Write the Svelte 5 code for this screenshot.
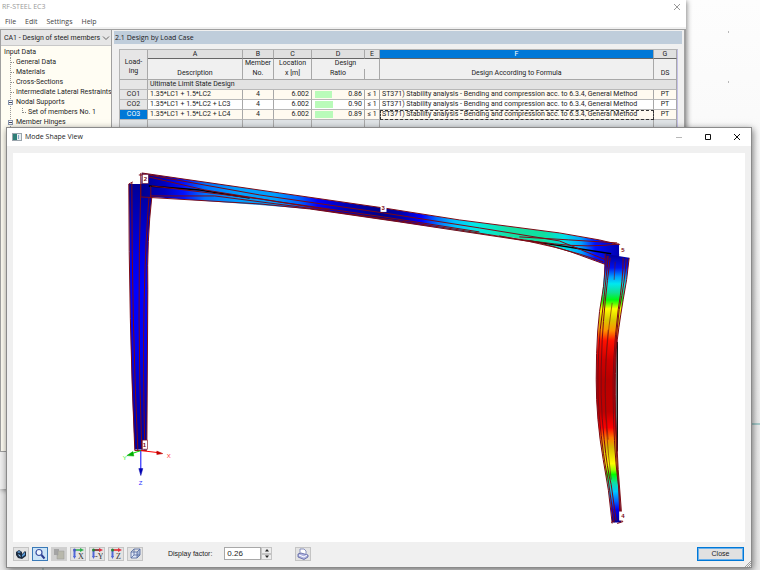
<script lang="ts">
	/**
	 * Design module window with the mode shape viewer opened on top of it.
	 */

	interface TreeNode {
		label: string;
		level: number;
		toggle?: boolean;
	}

	interface ResultRow {
		loading: string;
		description: string;
		member: number;
		location: string;
		ratio: number;
	}

	const menu = ['File', 'Edit', 'Settings', 'Help'];

	const tree: TreeNode[] = [
		{ label: 'General Data', level: 1 },
		{ label: 'Materials', level: 1 },
		{ label: 'Cross-Sections', level: 1 },
		{ label: 'Intermediate Lateral Restraints', level: 1 },
		{ label: 'Nodal Supports', level: 1, toggle: true },
		{ label: 'Set of members No. 1', level: 2 },
		{ label: 'Member Hinges', level: 1, toggle: true }
	];

	const rows: ResultRow[] = [
		{ loading: 'CO1', description: '1.35*LC1 + 1.5*LC2', member: 4, location: '6.002', ratio: 0.86 },
		{ loading: 'CO2', description: '1.35*LC1 + 1.5*LC2 + LC3', member: 4, location: '6.002', ratio: 0.9 },
		{ loading: 'CO3', description: '1.35*LC1 + 1.5*LC2 + LC4', member: 4, location: '6.002', ratio: 0.89 }
	];

	const formula = 'ST371) Stability analysis - Bending and compression acc. to 6.3.4, General Method';

	const axes = [
		{ letter: 'X', color: '#e02020' },
		{ letter: '-Y', color: '#701818' },
		{ letter: 'Z', color: '#e02020' }
	];

	// gradient stops as [coordinate, colour], along the member axis
	const leftStops: [number, string][] = [
		[184, '#000096'], [215, '#0000b8'], [255, '#0000e6'], [290, '#0000ff'],
		[350, '#0000f0'], [400, '#0000c0'], [450, '#00009a']
	];
	const beamStops: [number, string][] = [
		[142, '#000090'], [165, '#0000c0'], [184, '#0010ff'], [205, '#0070ff'],
		[240, '#00a0ff'], [275, '#00a0ff'], [300, '#0060ff'], [318, '#0000ff'],
		[345, '#0000b8'], [380, '#00008c'], [400, '#0000a8'], [422, '#0000ff'],
		[438, '#0070ff'], [455, '#00c0ff'], [475, '#00e8e8'], [510, '#14e0a4'],
		[545, '#10e0a0'], [565, '#00e0e8'], [582, '#00a0ff'], [596, '#0010ff'],
		[620, '#0000b0']
	];
	const rightStops: [number, string][] = [
		[256, '#0000a0'], [268, '#0010f0'], [277, '#00a0ff'], [284, '#00e8f0'],
		[293, '#10e090'], [300, '#00f810'], [304, '#60ff00'], [309, '#ffff00'],
		[320, '#d8c800'], [331, '#ff9000'], [341, '#ff1000'], [360, '#d00000'],
		[380, '#b80000'], [412, '#c00000'], [428, '#ff0000'], [438, '#ff7800'],
		[448, '#d8b800'], [464, '#ffff00'], [470, '#a0ff00'], [475, '#00ff00'],
		[483, '#10e0a0'], [492, '#00c8ff'], [502, '#0060ff'], [510, '#0000f0'],
		[522, '#0000a0']
	];

	let factor = $state('0.26');
	let caseName = $state('CA1');

	function step(delta: number): void {
		factor = (Number(factor) + delta).toFixed(2);
	}
</script>

<div class="desktop">
	<svg class="workplane" viewBox="0 0 760 570" preserveAspectRatio="none" aria-hidden="true">
		<path d="M728 32h1M728 82h1" stroke="#777" />
		<path d="M750 424h10" stroke="#a9cdcd" stroke-width="2" />
		<path d="M43 566v4" stroke="#8fb5b0" />
	</svg>

	<section class="module" aria-label="RF-STEEL EC3">
		<header class="module-title">
			<span>RF-STEEL EC3</span>
			<button class="module-close" aria-label="Close module">
				<svg viewBox="0 0 8 8"><path d="M1 1l6 6M7 1l-6 6" /></svg>
			</button>
		</header>
		<nav class="menu">
			{#each menu as item}
				<button>{item}</button>
			{/each}
		</nav>
		<div class="workspace">
			<aside class="navigator">
				<div class="case">
					<select bind:value={caseName} aria-label="Design case">
						<option value="CA1">CA1 - Design of steel members</option>
					</select>
					<svg viewBox="0 0 8 8" aria-hidden="true"><path d="M1 2.5l3 3 3-3" /></svg>
				</div>
				<div class="tree">
					<div class="root">Input Data</div>
					<ul>
						{#each tree as node}
							<li class:deep={node.level === 2}>
								{#if node.toggle}<i class="toggle"></i>{:else}<i class="twig"></i>{/if}
								<span>{node.label}</span>
							</li>
						{/each}
					</ul>
				</div>
			</aside>
			<main>
				<h2>2.1 Design by Load Case</h2>
				<div class="grid">
					<table>
						<colgroup>
							<col class="c-load" /><col class="c-desc" /><col class="c-member" />
							<col class="c-loc" /><col class="c-bar" /><col class="c-ratio" />
							<col class="c-limit" /><col /><col class="c-ds" />
						</colgroup>
						<thead>
							<tr class="letters">
								<th rowspan="3" class="loading">Load-<br />ing</th>
								<th>A</th><th>B</th><th>C</th><th colspan="2">D</th><th>E</th>
								<th class="current">F</th><th>G</th>
							</tr>
							<tr class="names">
								<th></th><th>Member</th><th>Location</th>
								<th colspan="3">Design</th><th></th><th></th>
							</tr>
							<tr class="names last">
								<th>Description</th><th>No.</th><th>x [m]</th>
								<th colspan="2">Ratio</th><th></th>
								<th>Design According to Formula</th><th>DS</th>
							</tr>
						</thead>
						<tbody>
							<tr class="group">
								<th></th>
								<td colspan="8">Ultimate Limit State Design</td>
							</tr>
							{#each rows as row, i}
								<tr class:odd={i % 2 === 0}>
									<th class:current={i === 2}>{row.loading}</th>
									<td>{row.description}</td>
									<td class="center">{row.member}</td>
									<td class="right">{row.location}</td>
									<td class="bar"><div style:width="{row.ratio * 100}%"></div></td>
									<td class="right">{row.ratio.toFixed(2)}</td>
									<td class="center">≤ 1</td>
									<td class:focused={i === 2}>{formula}</td>
									<td class="center">PT</td>
								</tr>
							{/each}
							<tr class="blank">
								<th></th><td></td><td></td><td></td><td colspan="2"></td><td></td><td></td><td></td>
							</tr>
						</tbody>
					</table>
				</div>
			</main>
		</div>
		<footer></footer>
	</section>

	<section class="viewer" role="dialog" aria-label="Mode Shape View">
		<header class="viewer-title">
			<svg class="app-icon" viewBox="0 0 10 8" aria-hidden="true">
				<rect x=".5" y=".5" width="9" height="7" fill="#e8eef0" stroke="#9aa4ac" />
				<rect x="1" y="1" width="4" height="6" fill="#2f7f78" />
				<rect x="6" y="2" width="1" height="4" fill="#88a8c8" />
			</svg>
			<h1>Mode Shape View</h1>
			<div class="captions">
				<button class="minimize" disabled aria-label="Minimize">
					<svg viewBox="0 0 8 8"><path d="M1 4.5h6" /></svg>
				</button>
				<button aria-label="Maximize">
					<svg viewBox="0 0 8 8"><path d="M1.5 1.5h5v5h-5z" /></svg>
				</button>
				<button aria-label="Close window">
					<svg viewBox="0 0 8 8"><path d="M1 1l6 6M7 1l-6 6" /></svg>
				</button>
			</div>
		</header>

		<div class="canvas">
			<svg viewBox="13 153 733 389" preserveAspectRatio="xMinYMin meet" role="img" aria-label="Mode shape of the frame">
				<defs>
					<linearGradient id="left" gradientUnits="userSpaceOnUse" x1="0" y1="184" x2="0" y2="450">
						{#each leftStops as [at, color]}
							<stop offset={(at - 184) / 266} stop-color={color} />
						{/each}
					</linearGradient>
					<linearGradient id="beam" gradientUnits="userSpaceOnUse" x1="142" y1="0" x2="620" y2="0">
						{#each beamStops as [at, color]}
							<stop offset={(at - 142) / 478} stop-color={color} />
						{/each}
					</linearGradient>
					<linearGradient id="right" gradientUnits="userSpaceOnUse" x1="0" y1="256" x2="0" y2="522">
						{#each rightStops as [at, color]}
							<stop offset={(at - 256) / 266} stop-color={color} />
						{/each}
					</linearGradient>
				</defs>

				<!-- left column, members 1-2 -->
				<path d="M129 184H151L152 197Q147 240 148 290L147 450H135Q131 380 130 280Z" fill="url(#left)" />
				<path
					class="edge"
					d="M129 184Q129 320 135 451M132 183Q132 320 138 451M141 184Q137 320 142 450M150 187Q141 290 145 450M152 197Q147 240 148 290L147 450M129 184l4-2M135 451h12"
				/>

				<!-- rafter, members 2-3-5 -->
				<path
					d="M142 173L280 193 384 208 460 220 560 233 600 240 620 245V256L613 267Q596 261 580 255T540 243 480 234L400 222 310 209 260 205 152 197H141Z"
					fill="url(#beam)"
				/>
				<path class="axis" d="M149 186L200 190 250 198M530 241L612 254" />
				<path
					class="edge"
					d="M142 173L280 193 384 208 460 220 560 233 600 240 621 245M149 175L260 195 384 213 480 228 560 241 614 263M149 177L205 190 280 202 384 217 480 232M141 197L260 204 310 209 400 222 480 234 540 243Q564 249 580 255T613 267M152 186L260 199 330 210M150 196L215 196 300 207 400 221 460 230Q520 240 555 244T620 244M520 237Q570 240 618 243M500 236Q560 246 604 262M139 175h6M141 173V197M151 186V197"
				/>

				<!-- right column, members 5-4 -->
				<path
					d="M606 254L630 258Q628 280 624 300 619 330 617 350 615 400 617 430L619 470 622 523H613Q610 490 604 460 597 420 597 380 598 320 603 295 605 275 606 254Z"
					fill="url(#right)"
				/>
				<path class="axis" d="M618 342V452" />
				<path
					class="edge"
					d="M606 254Q606 280 603 295 597 325 597 380 597 420 604 460 610 490 613 524M609 256Q605 300 601 330 597 380 600 415 604 460 609 480L615 523M611 258Q605 305 603 340 600 400 605 440 608 470 612 485L617 521M624 258Q624 280 619 310 613 360 614 400 615 460 620 490L622 522M627 259Q626 280 620 310 614 360 616 400 617 460 619 480L621 521M630 258Q628 280 624 300 619 330 617 350 615 400 617 430L619 470 623 522M608 256V267M612 523l3-2M618 524l6-2"
				/>
				<path class="trace" d="M616 262l-1 18M613 303Q606 350 606 390T612 480M609 330Q603 390 609 440" />

				<!-- global axes -->
				<path d="M141 451V470" stroke="#0000ff" />
				<path d="M139 469h4l-2 7z" fill="#0000b0" stroke="#0000b0" stroke-width=".5" />
				<path d="M141 451L158 453" stroke="#ff0000" />
				<path d="M157 451.500l6 2.500-6 1z" fill="#c00000" stroke="#c00000" stroke-width=".5" />
				<path d="M141 451L132 454" stroke="#00e000" />
				<path d="M133 452l-6 4 7 .5z" fill="#00b000" stroke="#00b000" stroke-width=".5" />
				<text x="167" y="458" fill="#ff3030">X</text>
				<text x="123" y="460" fill="#20f020">Y</text>
				<text x="139" y="485" fill="#3030ff">Z</text>

				<!-- node labels -->
				<g class="node">
					<rect class="framed" x="142.5" y="174.5" width="6" height="9" /><text x="144" y="181">2</text>
					<rect x="381" y="205" width="6" height="7" /><text x="382" y="210">3</text>
					<rect x="620" y="245" width="6" height="9" /><text x="622" y="252">5</text>
					<rect class="framed" x="142.5" y="440.5" width="5" height="9" /><text x="143" y="447">1</text>
					<rect x="620" y="512" width="6" height="9" /><text x="622" y="519">4</text>
				</g>
			</svg>
		</div>

		<footer class="toolbar">
			<button aria-label="Rendering">
				<svg viewBox="0 0 12 12">
					<path d="M1 4l3-2 3 2v2l3-3 1 1v4l-4 3-4-1-2-3z" fill="#1d2c40" />
					<path d="M2 4l2-1 2 1-2 1zM7 7l3-3v3L7 9z" fill="#5b9bd8" />
					<path d="M3 6l2 1 1 2-2-1z" fill="#8cc0f0" />
				</svg>
			</button>
			<button class="active" aria-label="Zoom">
				<svg viewBox="0 0 12 12">
					<circle cx="5" cy="4.500" r="3" fill="#eef6ff" stroke="#3b4fa0" stroke-width="1.200" />
					<path d="M7.500 7l3 3.500" stroke="#2c3c90" stroke-width="2" />
				</svg>
			</button>
			<button class="off" disabled aria-label="Sections">
				<svg viewBox="0 0 12 12">
					<path d="M1 1h5v6H1z" fill="#a4a4a4" />
					<path d="M5 3h6v8H4V7h1z" fill="#b8b8ac" stroke="#999" stroke-width=".5" />
				</svg>
			</button>
			{#each axes as axis}
				<button aria-label="View in {axis.letter}">
					<svg viewBox="0 0 12 12">
						<path d="M2 2h7" stroke={axis.letter === 'X' ? '#30b050' : axis.color} stroke-width="1.500" />
						<path d="M8 0l4 2-4 2z" fill={axis.letter === 'X' ? '#30b050' : '#e03040'} />
						<path d="M2.500 3v6" stroke="#5068d8" stroke-width="2" />
						<path d="M1 8h3L2.500 11z" fill="#5068d8" />
						<circle cx="2.500" cy="2" r="1.500" fill={axis.letter === 'X' ? '#4858c0' : '#288038'} />
						<text x={axis.letter.length > 1 ? 4 : 6} y="11">{axis.letter}</text>
					</svg>
				</button>
			{/each}
			<button aria-label="Isometric view">
				<svg viewBox="0 0 12 12">
					<path d="M2 4h6v6H2z" fill="#dfe7f6" />
					<path d="M8 4l3-3v6l-3 3z" fill="#a8b8d8" />
					<path d="M2 4l3-3h6v6L8 10H2zM2 4h6v6M8 4l3-3M5 1v6h6M5 7l-3 3" fill="none" stroke="#5068a0" stroke-width=".8" />
				</svg>
			</button>
			<label for="factor">Display factor:</label>
			<div class="spin">
				<input id="factor" type="text" bind:value={factor} />
				<div class="arrows">
					<button aria-label="Increase" onclick={() => step(0.01)}><svg viewBox="0 0 6 4"><path d="M1 3.500h4L3 1z" /></svg></button>
					<button aria-label="Decrease" onclick={() => step(-0.01)}><svg viewBox="0 0 6 4"><path d="M1 .5h4L3 3z" /></svg></button>
				</div>
			</div>
			<button class="print" aria-label="Print">
				<svg viewBox="0 0 12 12">
					<path d="M3 6V1h4l2 2v4" fill="#fff" stroke="#7078b0" stroke-width=".8" />
					<path d="M1 6l3-1 7 2v2l-4 2.500L1 9z" fill="#b0b4e0" stroke="#5860a0" stroke-width=".8" />
					<path d="M2 7l5 2 3-2" fill="none" stroke="#fff" />
				</svg>
			</button>
			<button class="close">Close</button>
		</footer>
		<svg class="grip" viewBox="0 0 7 7" aria-hidden="true"><path d="M1 7l6-6M3 7l4-4M5 7l2-2" /></svg>
	</section>
</div>

<style>
	:global(body) {
		margin: 0;
	}

	.desktop {
		position: relative;
		height: 100vh;
		overflow: hidden;
		background: linear-gradient(#fdfdfd, #fafafa 20%, #ececec 75%, #eaeaea);
		font-family: Roboto, 'Liberation Sans', sans-serif;
		font-size: 7px;
		line-height: 10px;
		color: #1c1c24;
	}

	.workplane {
		position: absolute;
		inset: 0;
		width: 100%;
		height: 100%;
	}

	button,
	input,
	select {
		margin: 0;
		padding: 0;
		font: inherit;
		color: inherit;
		box-sizing: border-box;
	}

	svg {
		display: block;
	}

	/* module window */

	.module {
		position: absolute;
		inset: 0 74px 81px 0;
		display: flex;
		flex-direction: column;
		background: #f0f0f0;
		box-shadow: 1px 1px 5px #0007;
	}

	.module-title {
		display: flex;
		justify-content: space-between;
		align-items: center;
		height: 14px;
		padding: 0 5px 0 2px;
		background: #fff;
		color: #999;
		font-family: 'Open Sans', sans-serif;
	}

	.module-close,
	.menu button,
	.captions button {
		border: none;
		background: none;
	}

	.module-close svg,
	.captions svg {
		width: 8px;
		height: 8px;
		fill: none;
		stroke: #999;
	}

	.menu {
		display: flex;
		align-items: flex-end;
		gap: 9px;
		height: 13px;
		padding-left: 5px;
		background: #fff;
		color: #444;
		font-family: 'Open Sans', sans-serif;
	}

	.workspace {
		flex: 1;
		display: flex;
		min-height: 0;
		margin-top: 2px;
		border: 1px solid #a0a0a0;
		border-width: 1px 2px 1px 1px;
	}

	.navigator {
		display: flex;
		flex-direction: column;
		width: 110px;
		border-right: 1px solid #a0a0a0;
		background: #fffdf3;
	}

	.case {
		display: grid;
		align-items: center;
		height: 15px;
		background: #e6e6e6;
		border-bottom: 1px solid #c8c8c8;
	}

	.case select,
	.case svg {
		grid-area: 1 / 1;
	}

	.case select {
		appearance: none;
		height: 14px;
		padding-left: 3px;
		border: none;
		background: none;
	}

	.case svg {
		justify-self: end;
		width: 8px;
		height: 8px;
		margin-right: 1px;
		fill: none;
		stroke: #666;
		pointer-events: none;
	}

	.tree {
		flex: 1;
		padding-top: 1px;
		overflow: hidden;
		white-space: nowrap;
	}

	.root {
		padding-left: 3px;
	}

	ul {
		margin: 0 0 0 9px;
		padding: 0;
		list-style: none;
		border-left: 1px dotted #999;
	}

	li {
		display: flex;
		align-items: center;
		gap: 2px;
	}

	li.deep {
		padding-left: 11px;
	}

	.twig {
		flex: none;
		width: 3px;
		border-top: 1px dotted #888;
	}

	.deep .twig {
		height: 4px;
		margin-bottom: 4px;
		border-top: none;
		border-bottom: 1px dotted #888;
		border-left: 1px dotted #888;
	}

	.toggle {
		flex: none;
		width: 3px;
		height: 3px;
		margin-left: -3px;
		border: 1px solid #8a98b0;
		background: linear-gradient(#fff 1px, #445 1px 2px, #fff 2px);
	}

	.toggle + span {
		padding-left: 1px;
	}

	main {
		flex: 1;
		display: flex;
		flex-direction: column;
		min-width: 0;
		padding: 1px 2px 0;
	}

	h2 {
		margin: 0;
		padding-left: 1px;
		background: #bfcddb;
		font-family: 'Open Sans', sans-serif;
		font-size: 7px;
		font-weight: 400;
		line-height: 13px;
	}

	.grid {
		flex: 1;
		margin: 5px 4px 0 5px;
		border: 1px solid #b4b4b4;
		border-right-color: #c4c0e8;
		background: #dfe3e6;
	}

	table {
		width: 100%;
		table-layout: fixed;
		border-collapse: separate;
		border-spacing: 0;
		white-space: nowrap;
	}

	.c-load {
		width: 28px;
	}
	.c-desc {
		width: 95px;
	}
	.c-member {
		width: 31px;
	}
	.c-loc {
		width: 38px;
	}
	.c-bar {
		width: 27px;
	}
	.c-ratio {
		width: 26px;
	}
	.c-limit {
		width: 15px;
	}
	.c-ds {
		width: 23px;
	}

	th,
	td {
		box-sizing: border-box;
		height: 10px;
		padding: 0 2px;
		overflow: hidden;
		border-right: 1px solid #a8a8a8;
		border-bottom: 1px solid #b8b8b8;
		font-weight: 400;
		line-height: 9px;
	}

	th {
		background: #e6e6e6;
		text-align: center;
	}

	td {
		background: #fff;
	}

	.odd td {
		background: #fffaf0;
	}

	.letters th {
		height: 9px;
		border-bottom-color: #666;
		background: #e0e0e0;
		line-height: 8px;
	}

	.names th {
		border-bottom: none;
		background: #f0f0f0;
		vertical-align: top;
	}

	.names.last th {
		height: 11px;
		border-bottom: 1px solid #a8a8a8;
	}

	.letters .loading {
		padding-top: 4px;
		border-bottom-color: #a8a8a8;
		background: #e6e6e6;
		line-height: 9px;
	}

	.letters .current,
	tbody .current {
		background: #0078d7;
		color: #fff;
	}

	.group td {
		background: #e2e2e2;
	}

	.center {
		text-align: center;
	}

	.right {
		text-align: right;
	}

	.bar {
		padding: 0 4px 0 3px;
		border-right: none;
	}

	.bar div {
		height: 7px;
		background: #b9fbb9;
	}

	.focused {
		outline: 1px dashed #333;
		outline-offset: -1px;
	}

	.blank th,
	.blank td {
		height: 11px;
		background: #dfe3e6;
	}

	.module footer {
		height: 37px;
	}

	/* mode shape window */

	.viewer {
		position: absolute;
		inset: 127px 8px 2px 6px;
		box-sizing: border-box;
		display: flex;
		flex-direction: column;
		border: 1px solid #8a8a8a;
		background: #f0f0f0;
		box-shadow: 1px 2px 7px #0008;
	}

	.viewer-title {
		display: flex;
		align-items: center;
		height: 18px;
		padding-left: 5px;
		background: #fff;
	}

	.app-icon {
		width: 10px;
		height: 8px;
	}

	h1 {
		flex: 1;
		margin: 0 0 0 3px;
		font-family: 'Open Sans', sans-serif;
		font-size: 7px;
		font-weight: 400;
	}

	.captions {
		display: flex;
	}

	.captions button {
		width: 29px;
		height: 18px;
	}

	.captions svg {
		margin: 0 auto;
		stroke: #111;
	}

	.captions .minimize svg {
		stroke: #b8b8b8;
	}

	.canvas {
		flex: 1;
		min-height: 0;
		margin: 7px 6px 0;
		background: #fff;
	}

	.canvas svg {
		width: 100%;
		height: 100%;
	}

	.canvas text {
		font-family: 'Liberation Sans', sans-serif;
		font-size: 6px;
	}

	.edge {
		fill: none;
		stroke: #7c0a14;
		stroke-width: 1;
	}

	.axis {
		fill: none;
		stroke: #000;
		stroke-width: 1.5;
	}

	.trace {
		fill: none;
		stroke: #701010;
		stroke-width: 0.6;
	}

	.node rect {
		fill: #fff;
	}

	.node .framed {
		stroke: #7c0a14;
		stroke-width: 0.5;
	}

	.node text {
		fill: #7c0a14;
		font-weight: 700;
	}

	.toolbar {
		display: flex;
		align-items: center;
		gap: 3px;
		height: 23px;
		padding: 0 7px 2px 6px;
		font-family: 'Liberation Sans', sans-serif;
	}

	.toolbar > button {
		width: 16px;
		height: 14px;
		border: 1px solid #c4c4c4;
		background: #e3e3e3;
	}

	.toolbar > button svg {
		width: 12px;
		height: 12px;
		margin: 0 auto;
	}

	.toolbar > button text {
		font-family: 'Liberation Serif', serif;
		font-size: 8px;
		fill: #333;
	}

	.toolbar > .active {
		border-color: #3a7ab8;
		background: #cce4f7;
	}

	.toolbar > .off {
		border-color: #d0d0d0;
		background: #cfcfcf;
	}

	label {
		margin: 0 9px 0 22px;
	}

	.spin {
		display: flex;
		width: 48px;
		height: 13px;
	}

	.spin input {
		flex: 1;
		min-width: 0;
		padding-left: 2px;
		border: 1px solid #a8a8a8;
		background: #fff;
		font-size: 8px;
	}

	.arrows {
		display: flex;
		flex-direction: column;
		width: 11px;
	}

	.arrows button {
		flex: 1;
		min-height: 0;
		border: 1px solid #c4c4c4;
		background: #ececec;
	}

	.arrows svg {
		width: 6px;
		height: 4px;
		margin: 0 auto;
		fill: #222;
	}

	.toolbar > .print {
		margin-left: 20px;
	}

	.toolbar > .close {
		width: 47px;
		margin-left: auto;
		border: 1px solid #0078d7;
		outline: 1px solid #6bb0ea;
		outline-offset: -2px;
		background: #e1e1e1;
	}

	.grip {
		position: absolute;
		right: 0;
		bottom: 0;
		width: 7px;
		height: 7px;
		stroke: #a0a0a0;
	}
</style>
